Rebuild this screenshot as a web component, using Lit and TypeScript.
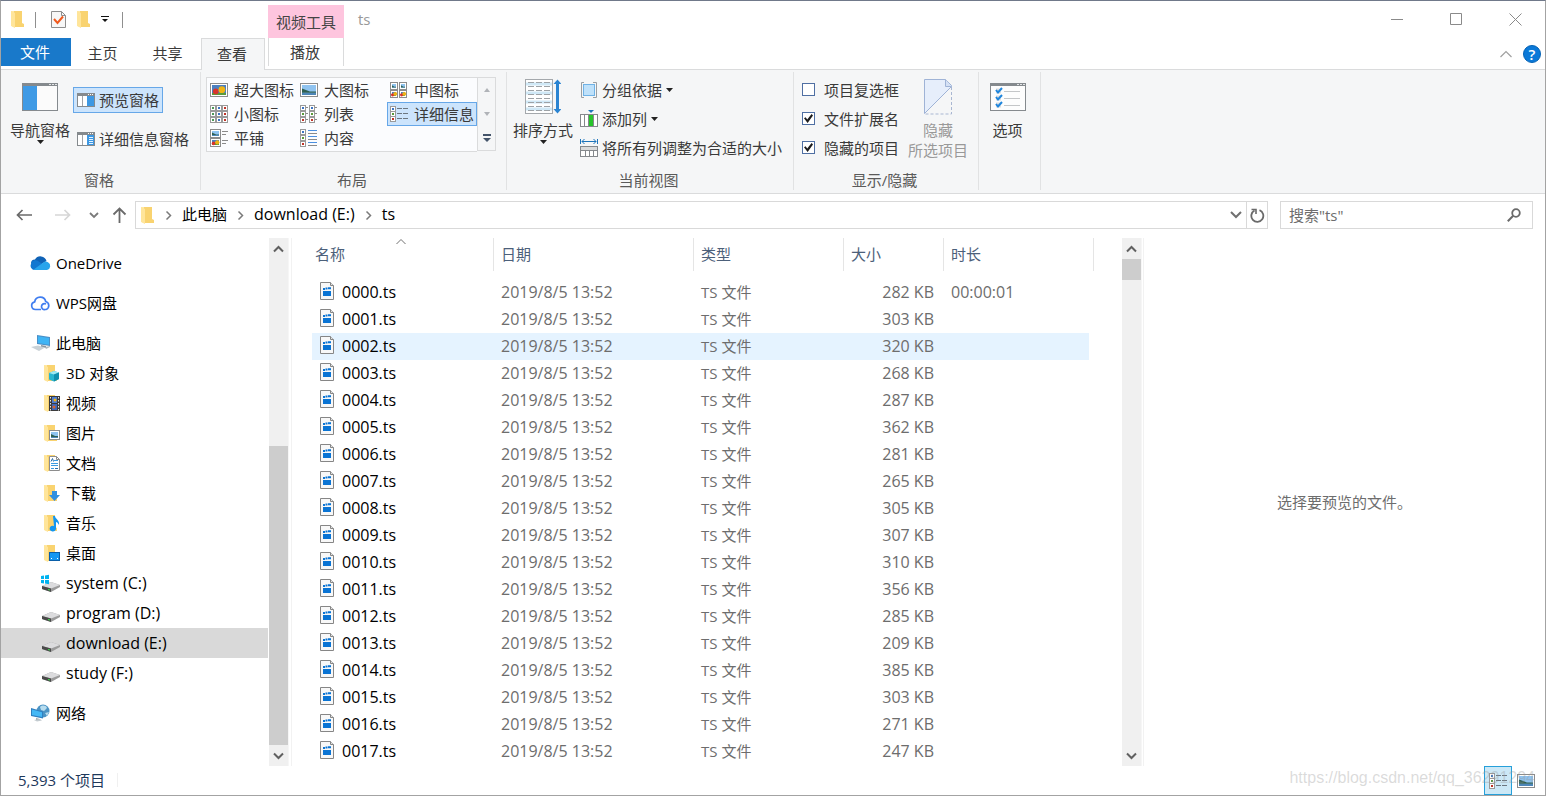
import { LitElement, html, svg, css } from "lit";
import { customElement, state } from "lit/decorators.js";
import { classMap } from "lit/directives/class-map.js";

const icon = (w: number, h: number, body: unknown) =>
  html`<svg width=${w} height=${h} viewBox="0 0 ${w} ${h}" fill="none" aria-hidden="true">${body}</svg>`;

/* ---------- shared picture fragments ---------- */

const folderShape = svg`
  <path d="M0 1h8v16H2l-2-2z" fill="#ffe9a6"/>
  <path d="M3 1h8v12l2 1v3H3z" fill="#f9d370"/>
  <path d="M0 1l4 2v15l-4-2z" fill="#ffe59a"/>`;

const folder = icon(14, 19, folderShape);

const mini = (x: number, y: number, c: string) => svg`
  <rect x=${x + 0.5} y=${y + 0.5} width="5" height="5" fill="#fff" stroke="#9a9a9a"/>
  <rect x=${x + 2} y=${y + 2} width="2" height="2" fill=${c}/>`;

const photo = (x: number, y: number, w: number, h: number) => svg`
  <rect x=${x + 0.5} y=${y + 0.5} width=${w - 1} height=${h - 1} fill="#fff" stroke="#8c8c8c"/>
  <rect x=${x + 2} y=${y + 2} width=${w - 4} height=${h - 4} fill="#8fc3f0"/>
  <path d="M${x + 2} ${y + h * 0.4}L${x + w * 0.55} ${y + h * 0.6}L${x + w - 2} ${y + h * 0.6}V${y + h * 0.7}H${x + 2}z" fill="#2f5f52"/>
  <rect x=${x + 2} y=${y + Math.round(h * 0.7)} width=${w - 4} height=${h - 2 - Math.round(h * 0.7)} fill="#4d86b8"/>`;

const flower = (x: number, y: number, w: number, h: number) => svg`
  <rect x=${x + 0.5} y=${y + 0.5} width=${w - 1} height=${h - 1} fill="#fff" stroke="#8c8c8c"/>
  <rect x=${x + 2} y=${y + 2} width=${w - 4} height=${h - 4} fill="#4a7fc0"/>
  <rect x=${x + 2} y=${y + h - 4} width=${w - 4} height="2" fill="#5a9a3a"/>
  <circle cx=${x + w * 0.32} cy=${y + h * 0.6} r=${h * 0.2} fill="#d8342a"/>
  <circle cx=${x + w * 0.66} cy=${y + h * 0.48} r=${h * 0.24} fill="#f0b414"/>`;

const caret = icon(7, 4, svg`<path d="M0 0h7L3.500 4z" fill="#222"/>`);
const chevron = (d: string, w = 12, h = 12, c = "#606060", s = 2) =>
  icon(w, h, svg`<path d=${d} stroke=${c} stroke-width=${s}/>`);
const crumbArrow = chevron("M1.500 1.500l4 4-4 4", 7, 11, "#7a7a7a", 1.5);

const pane = (detail: boolean) => icon(18, 14, svg`
  <rect x=".5" y=".5" width="17" height="13" fill="#fff" stroke="#858a8e"/>
  <rect width="18" height="3" fill="#858a8e"/>
  <path d="M11 1.500h1m1 0h1m1 0h1" stroke="#fff"/>
  <path d="M5.500 3v10" stroke="#a0a4a8"/>
  <rect x="10" y="3" width="7" height="10" fill="#3d98e3"/>
  ${detail ? svg`<path d="M12 5.500h4M12 7.500h4M12 9.500h4M12 11.500h4" stroke="#e6f3ff"/>` : ""}`);

const ribbonIcons = {
  nav: icon(36, 28, svg`
    <rect x=".5" y=".5" width="35" height="27" fill="#fbfbfb" stroke="#858a8e"/>
    <rect width="36" height="3" fill="#858a8e"/>
    <path d="M27 1.500h2m1 0h2m1 0h2" stroke="#e4e6e8"/>
    <rect x="1" y="3" width="14" height="24" fill="#3f9ae5"/>`),
  sort: icon(36, 36, svg`
    <rect x=".5" y=".5" width="27" height="34" fill="#fff" stroke="#a4a8ac"/>
    <path d="M1 5h26M1 14h26M1 23h26M1 30h26" stroke="#cfe8f6" stroke-width="3"/>
    <path d="M3 3.500h22M3 7.500h22M3 11.500h22M3 15.500h22M3 19.500h22M3 23.500h22M3 27.500h22M3 31.500h22" stroke="#9da2a6" stroke-dasharray="6 2"/>
    <path d="M32.500 3v29" stroke="#2a84d2" stroke-width="3"/>
    <path d="M28.500 5l4-4.500 4 4.500zM28.500 30l4 4.500 4-4.500z" fill="#2a84d2"/>`),
  group: icon(18, 18, svg`
    <path d="M4 1.500H1.500v15H4M13 1.500h3.500v15H13" stroke="#9a9fa3"/>
    <rect x="3.500" y="3.500" width="11" height="11" fill="#bfe1fa" stroke="#6fb2e6"/>`),
  addCol: icon(18, 18, svg`
    <path d="M8 0h6l-3 3z" fill="#1d74bb"/>
    <rect x=".5" y="4.500" width="17" height="12" fill="#fff" stroke="#85898d"/>
    <path d="M4.500 5v11M8.500 5v11M13.500 5v11" stroke="#85898d"/>
    <rect x="9" y="5" width="4" height="11" fill="#27c52b"/>`),
  fit: icon(18, 18, svg`
    <path d="M.5 0v5M17.500 0v5M2 2.500h14M4.500 0L2 2.500 4.500 5M13.500 0L16 2.500 13.500 5" stroke="#1d74bb"/>
    <rect x=".5" y="7.500" width="17" height="10" fill="#fff" stroke="#85898d"/>
    <rect x="1" y="8" width="16" height="3" fill="#d9dadb"/>
    <path d="M1 11.500h16M5.500 12v5M9.500 12v5M13.500 12v5" stroke="#85898d"/>`),
  hide: icon(30, 36, svg`
    <path d="M1.500.5h21l6 6v1l-27 27z" fill="#e6eefb" stroke="#9fb3d6"/>
    <path d="M22.500.5v7h6" fill="#d4e0f4" stroke="#9fb3d6"/>
    <path d="M28.500 8v27H1" stroke="#a9b7d2" stroke-dasharray="3 2"/>`),
  options: icon(36, 28, svg`
    <rect x=".5" y=".5" width="35" height="27" fill="#fdfdfd" stroke="#858a8e"/>
    <rect width="36" height="3" fill="#858a8e"/>
    <path d="M27 1.500h2m1 0h2m1 0h2" stroke="#e4e6e8"/>
    <path d="M14 8.500h16M14 15.500h16M14 22.500h16" stroke="#c4c6c8"/>
    ${[5, 12, 19].map((y) => svg`
      <rect x="6" y=${y + 0.5} width="5" height="5" fill="#dcdfe2"/>
      <path d="M6 ${y + 2}l2 2.500 4-4.500" stroke="#1f86dd" stroke-width="2"/>`)}`),
};

const galleryIcons = [
  icon(18, 18, flower(0, 2, 18, 14)),
  icon(18, 18, photo(0, 2, 18, 14)),
  icon(18, 18, svg`${photo(0, 1, 8, 8)}${photo(9, 1, 8, 8)}${flower(0, 9, 8, 8)}${flower(9, 9, 8, 8)}`),
  icon(18, 18, svg`${[0, 6, 12].map((y) => svg`${mini(0, y, "#4c9a58")}${mini(6, y, "#3b74c4")}${mini(12, y, "#c03428")}`)}`),
  icon(18, 18, svg`${[0, 9].map((x) => svg`
    ${mini(x, 0, "#3b74c4")}${mini(x, 6, "#5a9a3a")}${mini(x, 12, "#c03428")}
    <path d="M${x + 6} 2.500h2M${x + 6} 8.500h2M${x + 6} 14.500h2" stroke="#8a8a8a"/>`)}`),
  icon(18, 18, svg`${mini(0, 1, "#3b74c4")}${mini(0, 6, "#5a9a3a")}${mini(0, 11, "#c03428")}
    <path d="M7 3.500h5m1 0h5M7 8.500h5m1 0h5M7 13.500h5m1 0h5" stroke="#6d7780"/>`),
  icon(18, 18, svg`${photo(0, 0, 11, 9)}${flower(0, 9, 11, 9)}
    <path d="M12 2.500h6M12 5.500h4M12 11.500h6M12 14.500h4" stroke="#8a8a8a"/>`),
  icon(18, 19, svg`${mini(0, 0, "#3b74c4")}${mini(0, 6, "#5a9a3a")}${mini(0, 12, "#c03428")}
    <path d="M8 1.500h9M8 7.500h9M8 13.500h9" stroke="#4a8fe0"/>
    <path d="M8 4.500h9M8 10.500h9M8 16.500h9" stroke="#8a8a8a"/>`),
];

const small = (overlay: unknown) => icon(20, 20, svg`<g transform="translate(3 1)">${folderShape}</g>${overlay}`);

const drive = (windows: boolean) => icon(20, 20, svg`
  <path d="M1 13l9-4 9 3v2l-9 5-9-3z" fill="#9b9b9b"/>
  <path d="M1 13l9-4 9 3-9 3.500z" fill="#dcdcde"/>
  <path d="M1 13l9 2.500V19l-9-3z" fill="#4a4a4a"/>
  <path d="M7 16.500l2 .5" stroke="#39e04c"/>
  ${windows ? svg`<path d="M0 3l3-.5V6H0zM4 2.400l4-.6V6H4zM0 7h3v3.500L0 10zM4 7h4v4.200l-4-.6z" fill="#00b3f0"/>` : ""}`);

const sideIcons: Record<string, unknown> = {
  onedrive: icon(21, 20, svg`
    <path d="M5 6.500A6.300 6.300 0 0 1 16.500 8L10 12 1 10.500A4 4 0 0 1 5 6.500z" fill="#0f62b6"/>
    <path d="M1 11a4.400 4.400 0 0 1 7-3l6 4-10 5A4.300 4.300 0 0 1 1 11z" fill="#1277d0"/>
    <path d="M4 16.300L13 9.800a4.200 4.200 0 0 1 5-.6 4.200 4.200 0 0 1-1 7.800H5a4 4 0 0 1-1-.7z" fill="#28a4ec"/>`),
  wps: icon(21, 20, svg`
    <path d="M11 16.500H5.500a3.900 3.900 0 0 1-.8-7.700 5.600 5.600 0 0 1 11-.3 4.200 4.200 0 0 1 .3 8h-.8a3 3 0 1 1 .8-5.500" stroke="#3f7df0" stroke-width="1.700"/>`),
  pc: icon(21, 20, svg`
    <path d="M7 2l13 2v9L7 11z" fill="#4a90c8"/><path d="M8 3.200l11 1.700v6.900L8 10z" fill="#3fb4f4"/>
    <path d="M11 12l5 1v2l-5-1z" fill="#8a97a0"/>
    <path d="M1 14l7-1.500 7 2-6 3.500z" fill="#c9d1d6"/><path d="M15 14l5-1v1l-4 2z" fill="#b0b8bd"/>`),
  threeD: small(svg`<path d="M13 8l5 1.500V16l-5 2.500-5-2V10z" fill="#29b6cf"/><path d="M13 8l5 1.500-5 2-5-1.500z" fill="#9fe9f2"/><path d="M13 11.500l5-2V16l-5 2.500z" fill="#0f8fae"/>`),
  video: small(svg`<rect x="8" y="3" width="11" height="15" fill="#3b3b3b"/><rect x="11" y="4" width="5" height="6" fill="#4d7bd0"/><rect x="11" y="11" width="5" height="6" fill="#3c66b8"/><circle cx="14" cy="7" r="1.500" fill="#f0b414"/><circle cx="13" cy="14" r="1.500" fill="#d8642a"/><path d="M9.500 4v14M17.500 4v14" stroke="#e8e8e8" stroke-dasharray="1.500 1.500"/>`),
  picture: small(photo(8, 7, 11, 10)),
  doc: small(svg`<path d="M8.500 3.500h7l3 3v11h-10z" fill="#fff" stroke="#8d8d8d"/><path d="M15.500 3.500v3h3" stroke="#8d8d8d"/><path d="M13 7.500h4M10 10.500h7M10 12.500h7M10 15.500h3" stroke="#3c9be0"/><path d="M10 8.500l1.500-3 1 3M14 15.500h3" stroke="#2d6ea8"/>`),
  download: small(svg`<path d="M11 8h5v4h3l-5.500 6L8 12h3z" fill="#2f8fe0"/>`),
  music: small(svg`<path d="M12 3h2c0 3 5 4 4 9-1-2-2-3-3-3v6.500a3.200 2.800 0 1 1-2-2.500z" fill="#1296f0"/>`),
  desktop: small(svg`<rect x="8.500" y="9.500" width="10" height="8" fill="#1497f2" stroke="#0a5ea8"/><path d="M10 15.500h1m5 0h1" stroke="#fff"/>`),
  driveC: drive(true),
  drive: drive(false),
  network: icon(21, 20, svg`
    <circle cx="13" cy="8" r="6.500" fill="#4b93c4"/><path d="M10 4c2-2 6-2 7 1l-3 3-3-1zM15 10l4-1-2 4z" fill="#b7dcee"/>
    <path d="M1 5l12 3.500v7L1 13z" fill="#2f7fc0"/><path d="M2 6.500l10 2.800V14L2 12z" fill="#45b8f5"/>
    <path d="M6 15l4 1v2l-4-1z" fill="#9aa6ad"/><path d="M4 17l6-1 2 1.500-5 1z" fill="#c3cbd0"/>`),
};

const fileIcon = icon(14, 18, svg`
  <path d="M.5.5h10l3 3v14H.5z" fill="#f8f8f8" stroke="#868686"/>
  <path d="M10.500.5v3h3" fill="#e4e4e4" stroke="#868686"/>
  <rect x="3" y="9" width="8" height="5" fill="#0a74d4"/>
  <path d="M3 6h2v2H3zM5.500 5.600h2v2h-2zM8 5.200h3v2H8z" fill="#0a74d4"/>`);

/* ---------- data ---------- */

const gallery = ["超大图标", "大图标", "中图标", "小图标", "列表", "详细信息", "平铺", "内容"];
const places: { label: string; icon: string; level: number; latin?: boolean }[] = [
  { label: "OneDrive", icon: "onedrive", level: 0 },
  { label: "WPS网盘", icon: "wps", level: 0 },
  { label: "此电脑", icon: "pc", level: 0 },
  { label: "3D 对象", icon: "threeD", level: 1 },
  { label: "视频", icon: "video", level: 1 },
  { label: "图片", icon: "picture", level: 1 },
  { label: "文档", icon: "doc", level: 1 },
  { label: "下载", icon: "download", level: 1 },
  { label: "音乐", icon: "music", level: 1 },
  { label: "桌面", icon: "desktop", level: 1 },
  { label: "system (C:)", icon: "driveC", level: 1, latin: true },
  { label: "program (D:)", icon: "drive", level: 1, latin: true },
  { label: "download (E:)", icon: "drive", level: 1, latin: true },
  { label: "study (F:)", icon: "drive", level: 1, latin: true },
  { label: "网络", icon: "network", level: 0 },
];
const sizes = [282, 303, 320, 268, 287, 362, 281, 265, 305, 307, 310, 356, 285, 209, 385, 303, 271, 247];
const files = sizes.map((size, i) => ({
  name: `${String(i).padStart(4, "0")}.ts`,
  date: "2019/8/5 13:52",
  type: "TS 文件",
  size: `${size} KB`,
  length: i === 0 ? "00:00:01" : "",
}));

@customElement("app-root")
export class AppRoot extends LitElement {
  @state() private view = "详细信息";
  @state() private place = "download (E:)";
  @state() private hovered = 2;

  static styles = css`
    :host { display: block; font-family: "Open Sans", "Noto Sans CJK SC", sans-serif; font-size: 15px; line-height: 20px; color: #000; }
    * { box-sizing: border-box; }
    svg { display: block; flex: none; }
    button { font: inherit; color: inherit; background: none; border: 0; padding: 0; margin: 0; display: flex; align-items: center; }
    a { color: inherit; text-decoration: none; }

    .window { position: relative; display: flex; flex-direction: column; height: 100vh; overflow: hidden; background: #fff; border: 1px solid #a3a3a3; border-top-color: #70798a; }

    .titlebar { display: flex; height: 37px; flex: none; align-items: stretch; }
    .quick { display: flex; width: 267px; align-items: center; padding-left: 10px; }
    .quick .rule { width: 1px; height: 16px; background: #8f8f8f; }
    .quick .rule.first { margin: 0 15px 0 10px; }
    .quick .more { margin: 0 13px 0 10px; }
    .quick .doc { margin-right: 11px; }
    .context { width: 76px; margin-top: 4px; background: #fec5de; color: #444; display: flex; align-items: center; justify-content: center; }
    .title { margin: 0; padding-left: 14px; font-size: 15px; font-weight: 400; color: #999; line-height: 37px; flex: 1; }
    .winbtn { width: 59px; justify-content: center; }

    .tabs { display: flex; height: 32px; flex: none; border-bottom: 1px solid #dadbdc; color: #3a3a3a; }
    .tab { justify-content: center; width: 65px; height: 29px; padding-right: 2px; }
    .tab.file { width: 70px; height: 28px; background: #1979ca; color: #fff; }
    .tab.active { width: 64px; height: 32px; padding-bottom: 2px; background: #f5f6f7; border: 1px solid #dadbdc; border-bottom: 0; }
    .tab.play { width: 76px; margin-left: 3px; height: 28px; border: solid #dadbdc; border-width: 0 1px; }
    .tabs .space { flex: 1; }
    .tabs .collapse { margin-right: 11px; }
    .help { width: 18px; height: 18px; border-radius: 9px; background: #0b79d8; color: #fff; justify-content: center; align-self: center; margin-right: 4px; border: 1px solid #0563b5; font-weight: 600; line-height: 16px; }

    .ribbon { display: flex; flex: none; padding: 2px 0 3px; background: #f5f6f7; border-bottom: 1px solid #dadbdc; color: #3a3a3a; }
    .group { border-right: 1px solid #e1e2e3; }
    .group > .body { display: flex; height: 98px; }
    .group > .label { text-align: center; color: #5a5a5a; padding-right: 3px; }
    .g1 { width: 200px; } .g2 { width: 306px; } .g3 { width: 287px; } .g4 { width: 185px; } .g5 { width: 62px; }
    .big { flex-direction: column; width: 60px; white-space: nowrap; justify-content: flex-start; }
    .big .pic { height: 48px; padding-top: 2px; display: flex; align-items: center; }
    .big.off { color: #999; }
    .g1 .body { padding-left: 9px; gap: 3px; }
    .stack { display: flex; flex-direction: column; gap: 13px; padding-top: 15px; align-items: flex-start; }
    .tool { height: 26px; gap: 4px; padding: 0 3px; border: 1px solid transparent; white-space: nowrap; }
    .tool.on { background: #cce4fc; border-color: #66a7e8; }
    .g2 .body { padding: 5px 0 0 5px; }
    .gallery { display: grid; grid-template-columns: repeat(3, 90px); grid-auto-rows: 24px; height: 75px; border: 1px solid #dadbdc; border-right: 0; background: #fbfcfe; }
    .gallery button { gap: 6px; padding: 0 2px; border: 1px solid transparent; white-space: nowrap; line-height: 22px; }
    .gallery button.on { background: #cce4fc; border-color: #66a7e8; }
    .scroller { width: 19px; height: 74px; border: 1px solid #dadbdc; display: flex; flex-direction: column; }
    .scroller button { flex: 1; justify-content: center; }
    .g3 .body { padding-left: 6px; gap: 7px; }
    .rows { display: flex; flex-direction: column; padding-top: 3px; }
    .rows > * { height: 29px; display: flex; align-items: center; gap: 4px; white-space: nowrap; }
    .g4 .body { padding-left: 8px; gap: 9px; }
    .g4 .rows > * { gap: 9px; }
    .g5 .body { justify-content: center; padding-right: 4px; }
    .box { appearance: none; width: 13px; height: 13px; margin: 0; border: 1px solid #4f6fa3; background: #fff; display: flex; align-items: center; justify-content: center; }
    .box:checked::before { content: ""; width: 9px; height: 9px; background: #1c1c1c; clip-path: polygon(0 48%, 18% 36%, 36% 62%, 84% 0, 100% 16%, 40% 100%); }

    .address { display: flex; flex: none; align-items: center; height: 44px; padding: 7px 12px 9px 15px; }
    .address > button { margin-right: 23px; }
    .address .fwd { margin-right: 18px; }
    .address .drop { margin-right: 13px; }
    .address .up { margin-right: 8px; }
    .path { flex: 1; display: flex; align-items: stretch; height: 28px; border: 1px solid #d9d9d9; margin: 0 12px 0 0; }
    .crumbs { flex: 1; display: flex; align-items: center; gap: 10px; padding-left: 5px; }
    .crumbs a { padding-bottom: 2px; }
    .path .refresh { width: 21px; justify-content: center; border-left: 1px solid #d9d9d9; }
    .path .open { width: 20px; justify-content: center; }
    .latin { font-size: 16px; }
    .search { display: flex; align-items: center; width: 253px; height: 28px; border: 1px solid #d9d9d9; padding: 0 11px 0 8px; }
    .search input { flex: 1; min-width: 0; border: 0; outline: 0; padding: 0; background: none; font: inherit; color: #222; }
    .search input::placeholder { color: #6d6d6d; opacity: 1; }

    .main { flex: 1; min-height: 0; display: grid; grid-template-columns: 291px minmax(0, 852fr) minmax(0, 401fr); }
    .side, .list { display: flex; min-height: 0; min-width: 0; border-right: 1px solid #f2f2f2; overflow: hidden; }
    .side { padding-right: 2px; }
    .places { flex: 1; margin: 0; padding: 0; list-style: none; }
    .place { display: flex; align-items: center; height: 30px; gap: 5px; padding-left: 40px; white-space: nowrap; }
    .place.top { padding-left: 29px; margin-top: 10px; }
    .place.here { background: #d9d9d9; margin-right: 1px; }
    .bar { width: 20px; flex: none; background: #f0f0f0; display: flex; flex-direction: column; border-right: 1px solid #f6f6f6; }
    .bar button { height: 21px; justify-content: center; flex: none; }
    .bar .thumb { background: #cdcdcd; }
    .before { flex: 187; } .side .thumb { flex: 299; }
    .list .thumb { height: 21px; } .rest { flex: 1; }
    .list { padding-right: 1px; }
    .scroll { flex: 1; min-width: 0; overflow: hidden; padding-left: 20px; }

    table { border-collapse: collapse; table-layout: fixed; width: 777px; }
    .c1 { width: 182px; } .c2 { width: 200px; } .c3 { width: 150px; } .c4 { width: 100px; } .c5 { width: 145px; }
    th { position: relative; padding: 0; height: 41px; vertical-align: top; font-weight: 400; text-align: left; color: #4c607a; }
    th div { height: 33px; line-height: 33px; padding-left: 7px; border-right: 1px solid #e5e5e5; }
    th:first-child div { padding-left: 3px; }
    th:last-child div { margin-right: -5px; }
    .sorted { position: absolute; top: 1px; left: 84px; }
    td { height: 27px; padding: 0 10px 0 7px; color: #6d6d6d; line-height: 27px; white-space: nowrap; }
    td.name { padding-left: 8px; color: #000; }
    td.name a { display: flex; align-items: center; gap: 8px; }
    td.name svg { margin-bottom: 3px; }
    td.size { text-align: right; }
    tr.hover { background: #e5f3ff; }

    .preview { display: flex; align-items: center; justify-content: center; color: #6d6d6d; }

    .status { display: flex; flex: none; height: 29px; align-items: center; color: #1e395b; padding: 0 5px 0 17px; }
    .status .count { padding-right: 12px; margin-bottom: 2px; border-right: 1px solid #f0f0f0; line-height: 14px; flex: none; }
    .status .space { flex: 1; }
    .status .view { width: 28px; height: 29px; justify-content: center; }
    .status .view.on { background: #cce8f6; border: 1px solid #26a0da; }
    .mark { position: absolute; right: 10px; bottom: 7px; font: 16px/20px "Liberation Sans", sans-serif; color: rgba(150, 150, 150, 0.35); pointer-events: none; }
  `;

  private titlebar() {
    return html`<header class="titlebar">
      <div class="quick">
        ${folder}<span class="rule first"></span>
        <button class="doc" aria-label="属性">${icon(15, 19, svg`
          <path d="M.5 1.500h10l4 4v12H.5z" fill="#f7f7f7" stroke="#8e8e8e"/><path d="M10.500 1.500v4h4" stroke="#8e8e8e"/>
          <path d="M3 9l3.500 4L12 6.500" stroke="#f05a1e" stroke-width="2"/>`)}</button>
        <button aria-label="新建文件夹">${folder}</button>
        <button class="more" aria-label="自定义快速访问工具栏">${icon(8, 7, svg`<path d="M0 .5h8" stroke="#111"/><path d="M1 3h6L4 6z" fill="#111"/>`)}</button>
        <span class="rule"></span>
      </div>
      <div class="context">视频工具</div>
      <h1 class="title">ts</h1>
      <button class="winbtn" aria-label="最小化">${icon(13, 13, svg`<path d="M0 6.500h12" stroke="#8a8a8a"/>`)}</button>
      <button class="winbtn" aria-label="最大化">${icon(13, 13, svg`<path d="M.5.5h11v11H.5z" stroke="#8a8a8a"/>`)}</button>
      <button class="winbtn" aria-label="关闭">${icon(13, 13, svg`<path d="M.5.5l12 12M12.500.5l-12 12" stroke="#8a8a8a"/>`)}</button>
    </header>
    <nav class="tabs">
      <button class="tab file">文件</button><button class="tab">主页</button><button class="tab">共享</button>
      <button class="tab active">查看</button><button class="tab play">播放</button>
      <span class="space"></span>
      <button class="collapse" aria-label="最小化功能区">${chevron("M.500 7l5.500-5.500L11.500 7", 12, 8, "#a0a0a0", 1.2)}</button>
      <button class="help" aria-label="帮助">?</button>
    </nav>`;
  }

  private ribbon() {
    const R = ribbonIcons;
    return html`<section class="ribbon">
      <div class="group g1"><div class="body">
        <button class="big"><span class="pic">${R.nav}</span>导航窗格${caret}</button>
        <div class="stack">
          <button class="tool on">${pane(false)}预览窗格</button>
          <button class="tool">${pane(true)}详细信息窗格</button>
        </div></div><div class="label">窗格</div></div>
      <div class="group g2"><div class="body">
        <div class="gallery">${gallery.map((g, i) => html`<button class=${classMap({ on: g === this.view })} @click=${() => (this.view = g)}>${galleryIcons[i]}${g}</button>`)}</div>
        <div class="scroller">
          <button aria-label="向上">${icon(6, 4, svg`<path d="M0 4h6L3 0z" fill="#b0b3b8"/>`)}</button>
          <button aria-label="向下">${icon(6, 4, svg`<path d="M0 0h6L3 4z" fill="#b0b3b8"/>`)}</button>
          <button aria-label="更多">${icon(8, 8, svg`<path d="M0 1h8" stroke="#44546a" stroke-width="2"/><path d="M0 4h8L4 8z" fill="#44546a"/>`)}</button>
        </div></div><div class="label">布局</div></div>
      <div class="group g3"><div class="body">
        <button class="big"><span class="pic">${R.sort}</span>排序方式${caret}</button>
        <div class="rows">
          <button>${R.group}分组依据${caret}</button>
          <button>${R.addCol}添加列${caret}</button>
          <button>${R.fit}将所有列调整为合适的大小</button>
        </div></div><div class="label">当前视图</div></div>
      <div class="group g4"><div class="body">
        <div class="rows">
          <label><input class="box" type="checkbox" />项目复选框</label>
          <label><input class="box" type="checkbox" checked />文件扩展名</label>
          <label><input class="box" type="checkbox" checked />隐藏的项目</label>
        </div>
        <button class="big off" disabled><span class="pic">${R.hide}</span><span>隐藏</span><span>所选项目</span></button>
        </div><div class="label">显示/隐藏</div></div>
      <div class="group g5"><div class="body">
        <button class="big"><span class="pic">${R.options}</span>选项</button>
      </div></div>
    </section>`;
  }

  private address() {
    return html`<div class="address">
      <button aria-label="返回">${icon(16, 12, svg`<path d="M16 6H1.500M6.500 1l-5 5 5 5" stroke="#6a6a6a" stroke-width="1.700"/>`)}</button>
      <button class="fwd" aria-label="前进">${icon(16, 12, svg`<path d="M0 6h14.500M9.500 1l5 5-5 5" stroke="#d6d6d6" stroke-width="1.700"/>`)}</button>
      <button class="drop" aria-label="最近浏览的位置">${chevron("M1 1l4 4 4-4", 10, 7, "#7a7a7a", 1.8)}</button>
      <button class="up" aria-label="上移">${icon(15, 16, svg`<path d="M7.500 16V1.500M1.500 7.500l6-6 6 6" stroke="#6a6a6a" stroke-width="1.800"/>`)}</button>
      <div class="path">
        <div class="crumbs">${folder}${crumbArrow}<a href="#pc">此电脑</a>${crumbArrow}<a class="latin" href="#e">download (E:)</a>${crumbArrow}<a class="latin" href="#ts">ts</a></div>
        <button class="open" aria-label="展开">${chevron("M1 1l5 5 5-5", 12, 8, "#707070", 2)}</button>
        <button class="refresh" aria-label="刷新">${icon(15, 15, svg`<path d="M9.500 2.200A6 6 0 1 1 4.500 2.500" stroke="#6a6a6a" stroke-width="1.800"/><path d="M1.500 1.500h4.500V6" stroke="#6a6a6a" stroke-width="1.600"/>`)}</button>
      </div>
      <label class="search"><input type="text" placeholder='搜索"ts"' aria-label="搜索" />
        ${icon(14, 14, svg`<circle cx="9" cy="5" r="3.800" stroke="#6a6a6a" stroke-width="1.800"/><path d="M6.200 7.800L.8 13.200" stroke="#6a6a6a" stroke-width="2"/>`)}</label>
    </div>`;
  }

  private arrow(up: boolean) {
    return html`<button aria-label=${up ? "向上滚动" : "向下滚动"}>${chevron(up ? "M1 6.500l4.500-4.500L10 6.500" : "M1 1.500L5.500 6 10 1.500", 11, 8, "#606060", 2)}</button>`;
  }

  render() {
    return html`<div class="window">
      ${this.titlebar()}${this.ribbon()}${this.address()}
      <main class="main">
        <nav class="side">
          <ul class="places">${places.map((p) => html`<li>
            <a href="#" class=${classMap({ place: true, top: p.level === 0, here: p.label === this.place, latin: !!p.latin })}
              @click=${() => (this.place = p.label)}>${sideIcons[p.icon]}${p.label}</a></li>`)}</ul>
          <div class="bar">${this.arrow(true)}<span class="before"></span><span class="thumb"></span>${this.arrow(false)}</div>
        </nav>
        <section class="list">
          <div class="scroll"><table>
            <colgroup><col class="c1" /><col class="c2" /><col class="c3" /><col class="c4" /><col class="c5" /></colgroup>
            <thead><tr>
              <th><div>名称</div><span class="sorted">${chevron("M.500 5l4.500-4.500L9.500 5", 10, 6, "#707070", 1)}</span></th>
              <th><div>日期</div></th><th><div>类型</div></th><th><div>大小</div></th><th><div>时长</div></th>
            </tr></thead>
            <tbody>${files.map((f, i) => html`<tr class=${classMap({ hover: i === this.hovered })} @mouseenter=${() => (this.hovered = i)}>
              <td class="name latin"><a href="#">${fileIcon}${f.name}</a></td><td class="latin">${f.date}</td><td>${f.type}</td><td class="size latin">${f.size}</td><td class="latin">${f.length}</td>
            </tr>`)}</tbody>
          </table></div>
          <div class="bar">${this.arrow(true)}<span class="thumb"></span><span class="rest"></span>${this.arrow(false)}</div>
        </section>
        <aside class="preview">选择要预览的文件。</aside>
      </main>
      <footer class="status">
        <span class="count">5,393 个项目</span><span class="space"></span>
        <button class="view on" aria-label="详细信息">${galleryIcons[5]}</button>
        <button class="view" aria-label="大图标">${galleryIcons[1]}</button>
      </footer>
      <div class="mark">https://blog.csdn.net/qq_36291294</div>
    </div>`;
  }
}
